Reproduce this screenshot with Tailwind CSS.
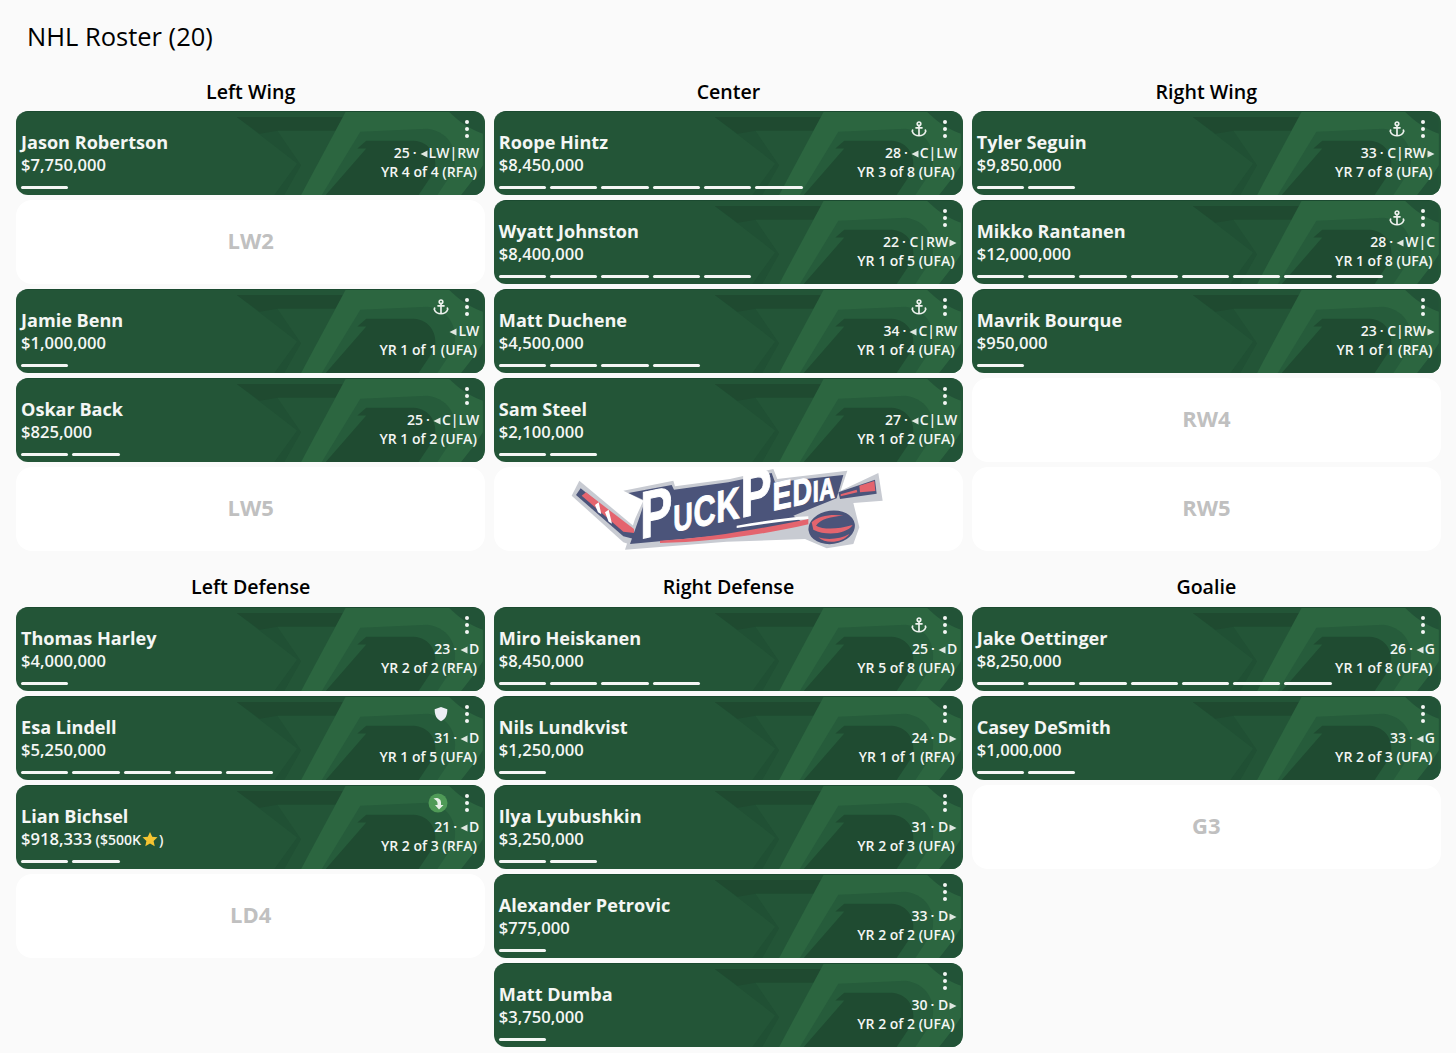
<!DOCTYPE html>
<html lang="en">
<head>
  <meta charset="UTF-8" />
  <title>NHL Roster</title>
  <script src="https://cdn.jsdelivr.net/npm/@tailwindcss/browser@4"></script>
</head>
<body class="bg-[#fafafa] font-['Open_Sans',sans-serif] text-black overflow-hidden">

  <!-- card watermark -->
  <svg class="hidden">
    <symbol id="wm" viewBox="0 0 470 84">
      <path d="M221 5 282 52 259 84H300L330 5Z" fill="#205034"/>
      <path d="M221 5H329L321 19H262L244 22Z" fill="#1f4a30"/>
      <path d="M262 19H321L300 60 286 84H269L286 54Z" fill="#235537"/>
      <path d="M331 0H470V84H286Z" fill="#2c6640"/>
      <path d="M346 20 414 17C438 20 446 42 440 60L424 84H307Z" fill="#265c3b"/>
      <path d="M352 29H400C416 30 425 44 421 60L405 84H311L352 37 343 37Z" fill="#1f4b31"/>
      <path d="M436 0H470V22C458 18 446 10 436 0Z" fill="#225337"/>
      <path d="M470 54V84H448L462 66Z" fill="#225337"/>
    </symbol>
  </svg>

  <div class="pt-5 pl-4 pr-[15px]">
    <h1 class="h-[34px] pl-[11px] text-[25.500px] leading-[32px]">NHL Roster (20)</h1>

    <div class="mt-[26px] grid grid-cols-3 gap-x-[8.500px]">
      <h2 class="text-center text-[19.600px] leading-6 font-semibold mb-[7px]">Left Wing</h2>
      <h2 class="text-center text-[19.600px] leading-6 font-semibold mb-[7px]">Center</h2>
      <h2 class="text-center text-[19.600px] leading-6 font-semibold mb-[7px]">Right Wing</h2>
      <div id="lw" class="flex flex-col gap-[5px]"></div>
      <div id="c" class="flex flex-col gap-[5px]"></div>
      <div id="rw" class="flex flex-col gap-[5px]"></div>
    </div>

    <div class="mt-[24px] grid grid-cols-3 gap-x-[8.500px]">
      <h2 class="text-center text-[19.600px] leading-6 font-semibold mb-2">Left Defense</h2>
      <h2 class="text-center text-[19.600px] leading-6 font-semibold mb-2">Right Defense</h2>
      <h2 class="text-center text-[19.600px] leading-6 font-semibold mb-2">Goalie</h2>
      <div id="ld" class="flex flex-col gap-[5px]"></div>
      <div id="rd" class="flex flex-col gap-[5px]"></div>
      <div id="g" class="flex flex-col gap-[5px]"></div>
    </div>
  </div>

  <script>
    const icons = {
      anchor: `<svg class="w-[18px] h-[18px]" viewBox="0 0 24 24" fill="none" stroke="#eef2ee" stroke-width="2.2" stroke-linecap="round"><circle cx="12" cy="5" r="2.4"/><path d="M12 7.5V21M8 10.5h8M3.5 13.5 3 15c1 3.500 5 6 9 6s8-2.500 9-6l-.5-1.500"/></svg>`,
      shield: `<svg class="w-[16px] h-[16px]" viewBox="0 0 24 24" fill="#eceef4"><path d="M12 1.500 21.500 5c0 9-2.500 14.500-9.500 18C5 19.500 2.500 14 2.500 5Z"/></svg>`,
      arrow: `<svg class="w-[20px] h-[20px] -translate-x-[3px]" viewBox="0 0 20 20"><circle cx="10" cy="10" r="9.500" fill="#4f9a57"/><path d="M5.500 5.500C9 4 13 5.500 13 9.500V12H15.500L11 16.500 7 12H9.500V10C9.500 8 7.500 6.800 5.500 5.500Z" fill="#e8f0e8"/></svg>`
    };
    const leftTri = `<svg class="inline-block w-[8px] h-[8px] ml-[3px] mr-px align-[0px]" viewBox="0 0 8 8"><path d="M0.500 4 7.500 0.500V7.500Z" fill="#dfe7e0"/></svg>`;
    const rightTri = `<svg class="inline-block w-[8px] h-[8px] ml-px align-[0px]" viewBox="0 0 8 8"><path d="M7.500 4 0.500 0.500V7.500Z" fill="#dfe7e0"/></svg>`;

    function playerCard(p) {
      const bars = Array.from({ length: p.bars }, () => `<span class="w-[47.300px] h-[3px] rounded-full bg-[#f4f6f4]"></span>`).join('');
      const age = p.age ? `${p.age}<span class="ml-[3px]">·</span>` : '';
      const line1 = age + (p.dir === 'l' ? leftTri : ' ') + p.pos + (p.dir === 'r' ? rightTri : '');
      return `
        <div class="relative h-[84px] overflow-hidden rounded-[12px] border-t border-[#1b4a30] bg-[#235537] text-[#f4f6f4]">
          <svg class="absolute inset-0 w-full h-full" preserveAspectRatio="none"><use href="#wm"/></svg>
          <div class="relative flex justify-between h-full pl-[5px] pr-[5px]">
            <div>
              <div class="mt-[18px] text-[18.100px] leading-[24px] font-bold whitespace-nowrap">${p.name}</div>
              <div class="text-[16.600px] leading-[22px] font-semibold whitespace-nowrap">${p.salary}${p.extra || ''}</div>
            </div>
            <div class="flex flex-col items-end">
              <div class="flex items-center gap-[14px] h-[31px] pt-[3px] pr-[11px]">
                ${p.icon ? `<span class="flex justify-center w-[20px]">${icons[p.icon]}</span>` : ''}
                <span class="flex flex-col gap-[3.300px]">
                  <i class="block w-[4px] h-[4px] rounded-full bg-[#f4f6f4]"></i>
                  <i class="block w-[4px] h-[4px] rounded-full bg-[#f4f6f4]"></i>
                  <i class="block w-[4px] h-[4px] rounded-full bg-[#f4f6f4]"></i>
                </span>
              </div>
              <div class="text-[14px] leading-[19px] font-semibold whitespace-nowrap pr-px">${line1}</div>
              <div class="text-[14px] leading-[19px] font-semibold whitespace-nowrap pr-[3.500px]">${p.term}</div>
            </div>
          </div>
          <div class="absolute left-[5px] top-[74px] flex gap-[4px]">${bars}</div>
        </div>`;
    }

    function emptySlot(label) {
      return `<div class="flex items-center justify-center h-[84px] pb-[3px] rounded-[16px] bg-white text-[22px] font-bold text-[#c0c0c0]">${label}</div>`;
    }

    const star = `<span class="text-[14px]"> ($500K<svg class="inline-block w-[18px] h-[18px] align-[-3px]" viewBox="0 0 24 24"><path d="M12 2.500 15 9l7 .8-5.200 4.700 1.500 7L12 18l-6.300 3.500 1.500-7L2 9.800 9 9Z" fill="#f5c431"/></svg>)</span>`;

    const logo = `
      <div class="flex items-center justify-center h-[84px] rounded-[16px] bg-white">
        <svg class="w-[340px] h-[100px] shrink-0 ml-[3px] overflow-visible" viewBox="0 0 1020 300">
          <path d="M58 65 225 205V262L190 250 35 110Z" fill="#c8cbd2"/>
          <path d="M190 95 340 65 345 82 510 60 640 30 652 60 862 35 842 95 955 42 968 125 880 132 898 205 880 255 800 268 735 240 500 248 195 272 225 180 250 125Z" fill="#c8cbd2"/>
          <path d="M62 88 222 218V240L190 232 48 108Z" fill="#4b547a"/>
          <path d="M78 100 222 210V222L190 218 65 110Z" fill="#e4646e"/>
          <path d="M105 138 116 130 124 166 114 160ZM135 160 146 152 156 194 146 188Z" fill="#fff"/>
          <path d="M205 102 335 78 342 92 505 70 635 42 645 70 850 48 830 118 700 170 735 195 500 228 210 255 240 170 255 125Z" fill="#4b547a"/>
          <path d="M835 100 945 62 950 104 840 120Z" fill="#4b547a"/>
          <path d="M842 106 890 92 892 100 842 112Z" fill="#e4646e"/>
          <path d="M898 80 943 66 946 96 900 100Z" fill="#e4646e"/>
          <g transform="translate(240 240) rotate(-12) skewX(-12) scale(.76 1)" font-family="'Liberation Sans',sans-serif" font-weight="700" fill="#fff" stroke="#fff" stroke-width="3">
            <text x="0" y="0" letter-spacing="3"><tspan font-size="196">P</tspan><tspan font-size="109">U</tspan><tspan font-size="124">C</tspan><tspan font-size="131">K</tspan><tspan font-size="189">P</tspan><tspan font-size="116">E</tspan><tspan font-size="109">D</tspan><tspan font-size="87">I</tspan><tspan font-size="87">A</tspan></text>
          </g>
          <path d="M300 245C450 238 620 205 745 180V196C620 225 450 250 300 252Z" fill="#e4646e"/>
          <path d="M530 200C620 184 700 174 745 172V180C670 186 600 197 530 207Z" fill="#fff"/>
          <ellipse cx="815" cy="205" rx="70" ry="50" fill="#4b547a" transform="rotate(-8 815 205)"/>
          <path d="M755 190C775 170 815 165 850 170 815 172 780 180 768 200 790 212 830 212 878 198 860 225 800 232 760 212ZM775 235C805 244 840 240 868 225 850 250 800 258 775 235Z" fill="#e4646e"/>
        </svg>
      </div>`;

    const roster = {
      lw: [
        { name: 'Jason Robertson', salary: '$7,750,000', age: 25, dir: 'l', pos: 'LW|RW', term: 'YR 4 of 4 (RFA)', bars: 1 },
        'LW2',
        { name: 'Jamie Benn', salary: '$1,000,000', dir: 'l', pos: 'LW', term: 'YR 1 of 1 (UFA)', bars: 1, icon: 'anchor' },
        { name: 'Oskar Back', salary: '$825,000', age: 25, dir: 'l', pos: 'C|LW', term: 'YR 1 of 2 (UFA)', bars: 2 },
        'LW5'
      ],
      c: [
        { name: 'Roope Hintz', salary: '$8,450,000', age: 28, dir: 'l', pos: 'C|LW', term: 'YR 3 of 8 (UFA)', bars: 6, icon: 'anchor' },
        { name: 'Wyatt Johnston', salary: '$8,400,000', age: 22, dir: 'r', pos: 'C|RW', term: 'YR 1 of 5 (UFA)', bars: 5 },
        { name: 'Matt Duchene', salary: '$4,500,000', age: 34, dir: 'l', pos: 'C|RW', term: 'YR 1 of 4 (UFA)', bars: 4, icon: 'anchor' },
        { name: 'Sam Steel', salary: '$2,100,000', age: 27, dir: 'l', pos: 'C|LW', term: 'YR 1 of 2 (UFA)', bars: 2 },
        'logo'
      ],
      rw: [
        { name: 'Tyler Seguin', salary: '$9,850,000', age: 33, dir: 'r', pos: 'C|RW', term: 'YR 7 of 8 (UFA)', bars: 2, icon: 'anchor' },
        { name: 'Mikko Rantanen', salary: '$12,000,000', age: 28, dir: 'l', pos: 'W|C', term: 'YR 1 of 8 (UFA)', bars: 8, icon: 'anchor' },
        { name: 'Mavrik Bourque', salary: '$950,000', age: 23, dir: 'r', pos: 'C|RW', term: 'YR 1 of 1 (RFA)', bars: 1 },
        'RW4',
        'RW5'
      ],
      ld: [
        { name: 'Thomas Harley', salary: '$4,000,000', age: 23, dir: 'l', pos: 'D', term: 'YR 2 of 2 (RFA)', bars: 1 },
        { name: 'Esa Lindell', salary: '$5,250,000', age: 31, dir: 'l', pos: 'D', term: 'YR 1 of 5 (UFA)', bars: 5, icon: 'shield' },
        { name: 'Lian Bichsel', salary: '$918,333', extra: star, age: 21, dir: 'l', pos: 'D', term: 'YR 2 of 3 (RFA)', bars: 2, icon: 'arrow' },
        'LD4'
      ],
      rd: [
        { name: 'Miro Heiskanen', salary: '$8,450,000', age: 25, dir: 'l', pos: 'D', term: 'YR 5 of 8 (UFA)', bars: 4, icon: 'anchor' },
        { name: 'Nils Lundkvist', salary: '$1,250,000', age: 24, dir: 'r', pos: 'D', term: 'YR 1 of 1 (RFA)', bars: 1 },
        { name: 'Ilya Lyubushkin', salary: '$3,250,000', age: 31, dir: 'r', pos: 'D', term: 'YR 2 of 3 (UFA)', bars: 2 },
        { name: 'Alexander Petrovic', salary: '$775,000', age: 33, dir: 'r', pos: 'D', term: 'YR 2 of 2 (UFA)', bars: 1 },
        { name: 'Matt Dumba', salary: '$3,750,000', age: 30, dir: 'r', pos: 'D', term: 'YR 2 of 2 (UFA)', bars: 1 }
      ],
      g: [
        { name: 'Jake Oettinger', salary: '$8,250,000', age: 26, dir: 'l', pos: 'G', term: 'YR 1 of 8 (UFA)', bars: 7 },
        { name: 'Casey DeSmith', salary: '$1,000,000', age: 33, dir: 'l', pos: 'G', term: 'YR 2 of 3 (UFA)', bars: 2 },
        'G3'
      ]
    };

    for (const [col, items] of Object.entries(roster)) {
      document.getElementById(col).innerHTML = items.map(item => {
        if (item === 'logo') return logo;
        return typeof item === 'string' ? emptySlot(item) : playerCard(item);
      }).join('');
    }
  </script>

</body>
</html>
